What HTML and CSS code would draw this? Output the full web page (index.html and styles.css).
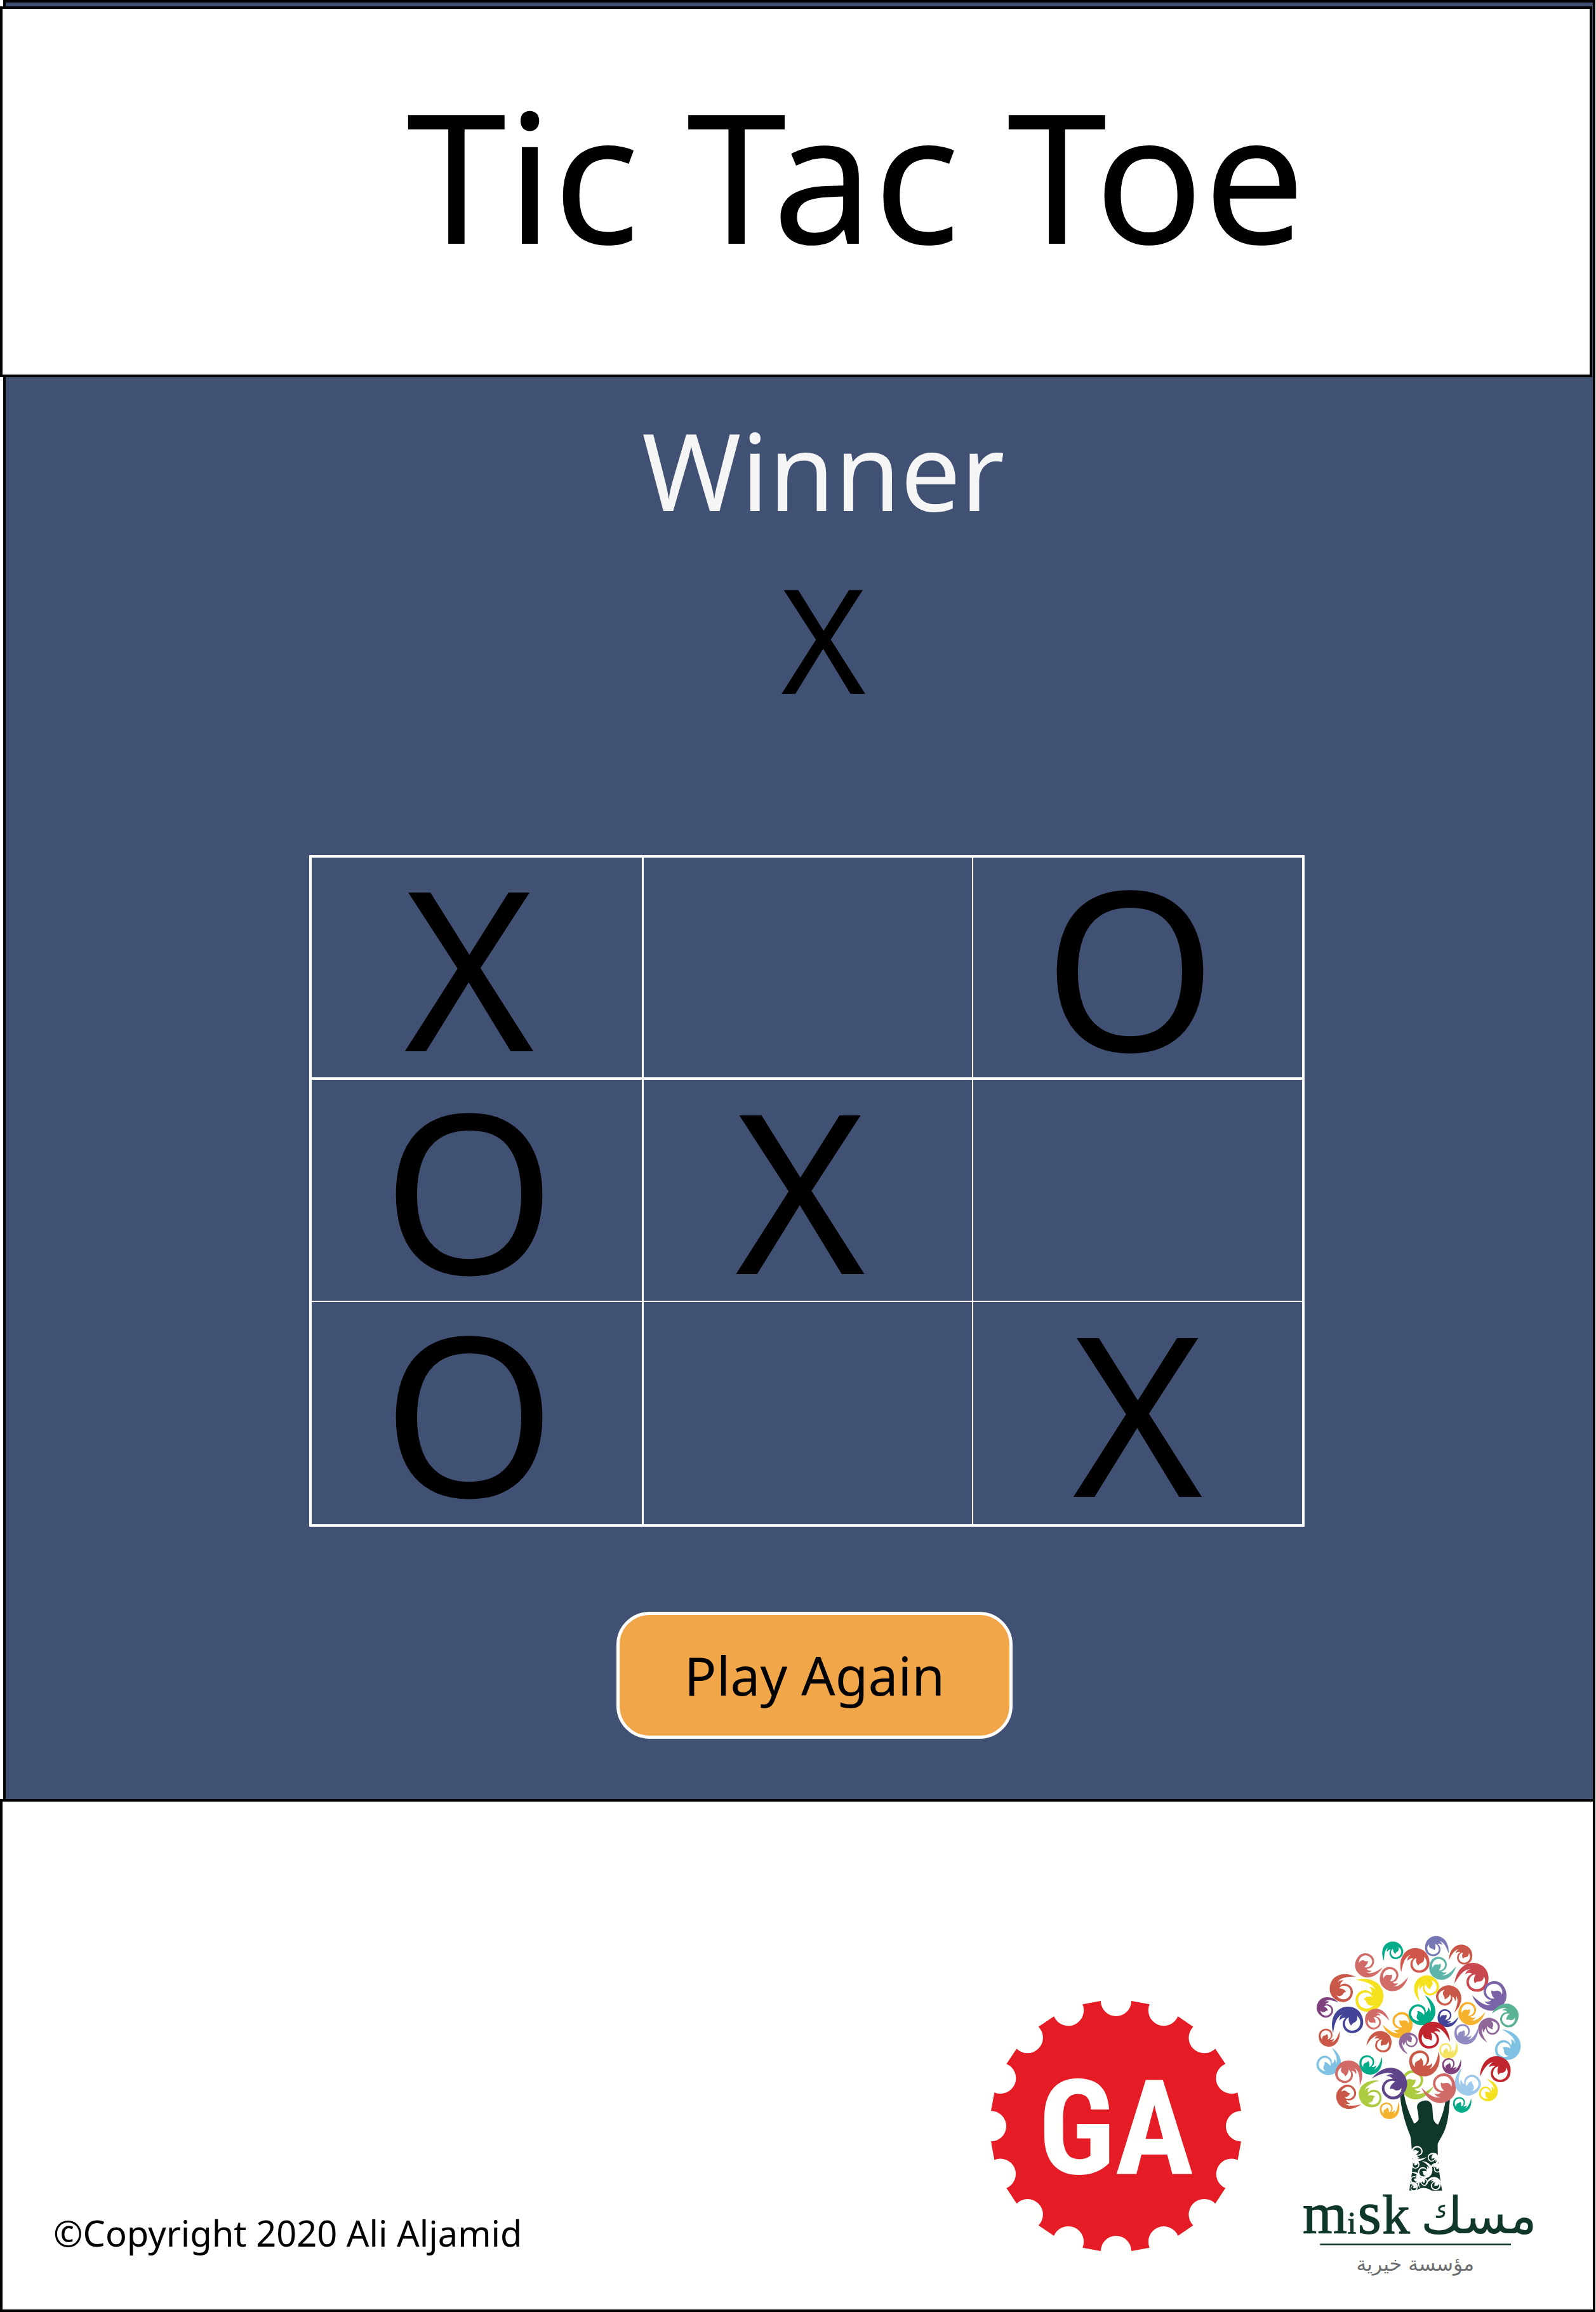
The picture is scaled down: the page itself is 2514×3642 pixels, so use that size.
FILE: index.html
```html
<!DOCTYPE html>
<html lang="en">
<head>
<meta charset="utf-8">
<meta name="viewport" content="width=device-width, initial-scale=1">
<title>Tic Tac Toe</title>
<link rel="stylesheet" href="styles.css">
</head>
<body>
<div class="app">
  <header class="header">
    <h1 class="title">Tic Tac Toe</h1>
  </header>

  <main class="main">
    <h2 class="winner-label">Winner</h2>
    <p class="winner-mark">X</p>

    <div class="board">
      <button class="cell" type="button">X</button>
      <button class="cell" type="button" aria-label="Empty"></button>
      <button class="cell" type="button">O</button>
      <button class="cell" type="button">O</button>
      <button class="cell" type="button">X</button>
      <button class="cell" type="button" aria-label="Empty"></button>
      <button class="cell" type="button">O</button>
      <button class="cell" type="button" aria-label="Empty"></button>
      <button class="cell" type="button">X</button>
    </div>

    <button class="play-again" type="button">Play Again</button>
  </main>

  <footer class="footer">
    <p class="copyright">©Copyright 2020 Ali Aljamid</p>

    <svg class="logo-ga" viewBox="64 66 1180 1180" role="img" aria-label="General Assembly">
      <path fill="#e51c25" d="M726 66L812 82A72 72 0 0 0 946 139L1018 188A72 72 0 0 0 1122 291L1170 363A72 72 0 0 0 1227 498L1244 585A72 72 0 0 0 1244 729L1228 816A72 72 0 0 0 1170 949L1122 1022A72 72 0 0 0 1018 1125L946 1174A72 72 0 0 0 812 1230L726 1246A72 72 0 0 0 582 1246L496 1230A72 72 0 0 0 361 1174L288 1125A72 72 0 0 0 185 1022L137 949A72 72 0 0 0 80 816L64 729A72 72 0 0 0 64 585L80 498A72 72 0 0 0 137 363L185 291A72 72 0 0 0 288 188L361 139A72 72 0 0 0 496 82L582 66A72 72 0 0 0 726 66Z"/>
      <text class="ga-text" x="653" y="880" text-anchor="middle">GA</text>
    </svg>

    <svg class="logo-misk" viewBox="30 54 1110 1626" role="img" aria-label="Misk Foundation">
      <defs>
        <path id="swirl" fill-rule="evenodd" d="M-88 46C-108 -25 -72 -79 -18 -79C30 -79 54 -40 54 -4C54 25 30 46 2 46C-26 46 -43 25 -43 2C-43 -10 -38 -18 -30 -26C-42 -28 -52 -22 -58 -12C-60 -26 -54 -36 -44 -42C-64 -36 -80 -14 -88 46ZM-14 -29C-26 -24 -32 -12 -32 0A32 32 0 0 0 0 34C24 34 40 18 40 -4C40 -18 34 -28 24 -36C30 -22 24 -10 14 -5C6 -2 0 2 -2 10C-12 2 -17 -14 -14 -29Z"/>
      </defs>
      <g fill="#0f382a">
        <path d="M495 800C500 870 515 930 545 1005C550 1030 550 1060 553 1090L555 1150C552 1190 545 1220 540 1262L575 1260Q605 1238 645 1262L695 1262C685 1210 672 1120 674 1042C690 1005 715 985 725 900L734 810L712 825C708 870 695 910 676 950C665 948 652 930 652 915L648 862C645 845 625 832 610 838C590 840 573 852 577 874C578 885 583 890 584 925C580 935 570 945 562 944C540 900 520 850 513 792Z"/>
      </g>
      <g fill="#fffffe">
        <use href="#swirl" transform="translate(580 1077) rotate(-120) scale(.5)"/>
        <use href="#swirl" transform="translate(646 1108) rotate(60) scale(-.4 .4)"/>
        <use href="#swirl" transform="translate(568 1142) rotate(10) scale(.36)"/>
        <use href="#swirl" transform="translate(605 1174) rotate(110) scale(.52)"/>
        <use href="#swirl" transform="translate(672 1160) rotate(0) scale(.36)"/>
        <use href="#swirl" transform="translate(563 1210) rotate(90) scale(.38)"/>
        <use href="#swirl" transform="translate(610 1224) rotate(-30) scale(.34)"/>
        <use href="#swirl" transform="translate(662 1238) rotate(30) scale(.46)"/>
        <use href="#swirl" transform="translate(560 1250) rotate(40) scale(.32)"/>
      </g>
      <use href="#swirl" fill="#00ab88" transform="translate(475 137) rotate(-9) scale(.68)"/>
      <use href="#swirl" fill="#7877b6" transform="translate(655 120) rotate(-11) scale(-.74 .74)"/>
      <use href="#swirl" fill="#d0564c" transform="translate(585 190) rotate(2) scale(.93)"/>
      <use href="#swirl" fill="#ca5848" transform="translate(797 160) rotate(16) scale(.72)"/>
      <use href="#swirl" fill="#d16b68" transform="translate(337 181) rotate(-133) scale(.82)"/>
      <use href="#swirl" fill="#d16b68" transform="translate(451 246) rotate(-148) scale(.84)"/>
      <use href="#swirl" fill="#5cb5a8" transform="translate(682 196) rotate(-148) scale(.8)"/>
      <use href="#swirl" fill="#c9474f" transform="translate(855 274) rotate(22) scale(1.03)"/>
      <use href="#swirl" fill="#7a63a7" transform="translate(936 322) rotate(143) scale(-1.02 1.02)"/>
      <use href="#swirl" fill="#5ab395" transform="translate(1005 451) rotate(45) scale(.8)"/>
      <use href="#swirl" fill="#ca5848" transform="translate(232 323) rotate(-81) scale(-.9 .9)"/>
      <use href="#swirl" fill="#f6e11e" transform="translate(334 360) rotate(92) scale(1.05)"/>
      <use href="#swirl" fill="#80427f" transform="translate(149 410) rotate(-60) scale(-.68 .68)"/>
      <use href="#swirl" fill="#434497" transform="translate(268 472) scale(1)"/>
      <use href="#swirl" fill="#d16b68" transform="translate(374 466) rotate(-33) scale(-.72 .72)"/>
      <use href="#swirl" fill="#f6b12d" transform="translate(500 462) rotate(142) scale(-.89 .89)"/>
      <use href="#swirl" fill="#f6e11e" transform="translate(638 303) rotate(-26) scale(.82)"/>
      <use href="#swirl" fill="#00ab88" transform="translate(582 422) rotate(138) scale(.9)"/>
      <use href="#swirl" fill="#ca5848" transform="translate(709 350) rotate(32) scale(-.84 .84)"/>
      <use href="#swirl" fill="#434497" transform="translate(711 435) rotate(-147) scale(.62)"/>
      <use href="#swirl" fill="#f6b12d" transform="translate(820 410) rotate(-147) scale(.8)"/>
      <use href="#swirl" fill="#8f8ac2" transform="translate(794 510) rotate(-166) scale(.74)"/>
      <use href="#swirl" fill="#906899" transform="translate(931 493) rotate(-44) scale(.73)"/>
      <use href="#swirl" fill="#ca5848" transform="translate(148 528) rotate(-170) scale(.66)"/>
      <use href="#swirl" fill="#ca5848" transform="translate(412 573) rotate(24) scale(.76)"/>
      <use href="#swirl" fill="#906899" transform="translate(548 556) rotate(-48) scale(.64)"/>
      <use href="#swirl" fill="#c1262f" transform="translate(638 546) rotate(-20) scale(-.96 .96)"/>
      <use href="#swirl" fill="#f4e35f" transform="translate(713 593) rotate(-190) scale(.6)"/>
      <use href="#swirl" fill="#7ec1e2" transform="translate(988 592) rotate(112) scale(.92)"/>
      <use href="#swirl" fill="#7ec1e2" transform="translate(142 662) rotate(141) scale(.82)"/>
      <use href="#swirl" fill="#00ab88" transform="translate(343 656) rotate(-173) scale(.72)"/>
      <use href="#swirl" fill="#d16b68" transform="translate(236 714) rotate(10) scale(-.88 .88)"/>
      <use href="#swirl" fill="#adcb40" transform="translate(561 742) rotate(-136) scale(.99)"/>
      <use href="#swirl" fill="#ca5848" transform="translate(592 645) rotate(-178) scale(.97)"/>
      <use href="#swirl" fill="#80427f" transform="translate(728 664) rotate(-174) scale(.6)"/>
      <use href="#swirl" fill="#c1262f" transform="translate(966 706) rotate(17) scale(.94)"/>
      <use href="#swirl" fill="#604489" transform="translate(458 778) rotate(53) scale(1.06)"/>
      <use href="#swirl" fill="#d16b68" transform="translate(697 758) rotate(142) scale(-1.02 1.02)"/>
      <use href="#swirl" fill="#9ec9ea" transform="translate(834 754) rotate(211) scale(-.86 .86)"/>
      <use href="#swirl" fill="#f6e11e" transform="translate(901 800) rotate(121) scale(.66)"/>
      <use href="#swirl" fill="#ca5848" transform="translate(252 803) rotate(-112) scale(.8)"/>
      <use href="#swirl" fill="#adcb40" transform="translate(370 822) rotate(-99) scale(-.84 .84)"/>
      <use href="#swirl" fill="#f6b12d" transform="translate(434 875) rotate(-183) scale(.63)"/>
      <use href="#swirl" fill="#00ab88" transform="translate(778 847) rotate(-173) scale(.58)"/>
      <g class="misk-name">
        <text x="36" y="1463" font-size="270">m</text>
        <text x="248" y="1463" font-size="145">i</text>
        <text x="296" y="1463" font-size="285">s</text>
        <text x="412" y="1463" font-size="260">k</text>
      </g>
      <text class="misk-arabic" x="868" y="1463" text-anchor="middle" font-size="242">مسك</text>
      <rect x="118" y="1513" width="902" height="8" fill="#0f382a"/>
      <text class="misk-tagline" x="568" y="1640" text-anchor="middle" font-size="94">مؤسسة خيرية</text>
    </svg>
  </footer>
</div>
</body>
</html>
```
FILE: styles.css
```css
* {
  box-sizing: border-box;
}

body {
  margin: 0;
  background: #fffffe;
  color: #000;
  font-family: "Noto Sans", "Open Sans", sans-serif;
}

h1,
h2,
p {
  margin: 0;
  font-weight: 400;
}

button {
  margin: 0;
  padding: 0;
  color: inherit;
  font-family: inherit;
  cursor: pointer;
}

.app {
  margin: 0 1px 0 5px;
  border: 4px solid #000;
  border-bottom: 0;
  background: #415173;
}

/* The header and footer overhang the left edge of the frame. */
.header {
  margin: 6px 1px 0 -9px;
  padding: 60px 0 116px 188px;
  border: 4px solid #000;
  background: #fff;
  text-align: center;
}

.title {
  font-size: 284px;
  line-height: 400px;
}

.main {
  display: flex;
  flex-direction: column;
  align-items: center;
  padding: 46px 0 95px;
}

.winner-label {
  padding-left: 76px;
  color: #f5f5f5;
  font-size: 168px;
  line-height: 200px;
}

.winner-mark {
  margin-top: 45px;
  padding-left: 76px;
  font-size: 228px;
  line-height: 240px;
}

.board {
  display: grid;
  grid-template-columns: repeat(3, 1fr);
  grid-auto-rows: 350px;
  align-self: stretch;
  margin: 222px 454px 0 478px;
  border: 4px solid #fff;
}

.cell {
  padding: 0 24px 6px 0;
  border: 0 solid #fff;
  background: none;
  font-size: 350px;
  line-height: 300px;
}

.cell:nth-child(3n + 2) {
  border-left-width: 3px;
}

.cell:nth-child(3n) {
  border-left-width: 2px;
}

.cell:nth-child(-n + 3) {
  border-bottom-width: 4px;
}

.cell:nth-child(n + 4):nth-child(-n + 6) {
  border-bottom-width: 2px;
}

.cell:last-child {
  padding-right: 0;
}

.play-again {
  margin: 134px 0 0 48px;
  padding: 0 102px;
  border: 5px solid #fff;
  border-radius: 52px;
  background: #f2a64a;
  font-size: 84px;
  line-height: 190px;
}

.footer {
  display: flex;
  align-items: flex-end;
  margin: 0 -4px 0 -9px;
  padding: 210px 89px 48px 80px;
  border: 4px solid #000;
  background: #fffffe;
}

.copyright {
  margin: 0 auto 35px 0;
  font-size: 56px;
  line-height: 76px;
}

.logo-ga {
  width: 394px;
  height: 394px;
  margin: 0 95px 44px 0;
}

.ga-text {
  fill: #fffffe;
  font-family: "Roboto Condensed", "Liberation Sans Narrow", "Liberation Sans", sans-serif;
  font-size: 620px;
  font-weight: 700;
}

.logo-misk {
  width: 370px;
  height: 542px;
}

.misk-name {
  fill: #0f382a;
  stroke: #0f382a;
  stroke-width: 4px;
  font-family: "Liberation Serif", serif;
}

.misk-arabic {
  fill: #0f382a;
  font-family: "DejaVu Sans", sans-serif;
}

.misk-tagline {
  fill: #6d6e71;
  font-family: "DejaVu Sans", sans-serif;
}
```
